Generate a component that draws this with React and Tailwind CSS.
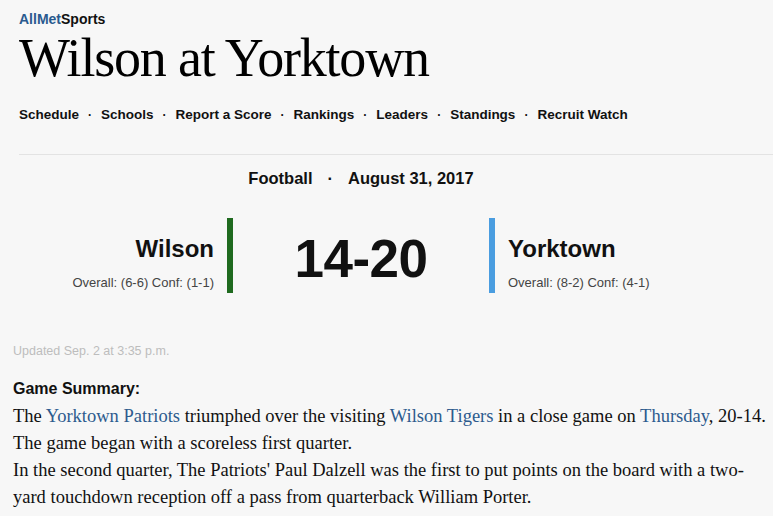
const NAV = ["Schedule", "Schools", "Report a Score", "Rankings", "Leaders", "Standings", "Recruit Watch"];

const sans = { fontFamily: '"Liberation Sans", Arial, sans-serif' };

function Team({ name, record, align }) {
  return (
    <div className={align === "right" ? "w-[195px] text-right" : "w-[195px] text-left"}>
      <div className="text-[24px] font-bold leading-[30px] text-[#111] mt-[16px]">{name}</div>
      <div className="text-[13px] leading-[16px] text-[#444] mt-[11px]">{record}</div>
    </div>
  );
}

export default function App() {
  return (
    <div className="min-h-[516px] bg-[#f7f7f7] text-[#111]" style={sans}>
      <div className="pl-[19px] pt-[11px]">
        <div className="text-[14px] font-bold leading-[16px]">
          <span className="text-[#2a5a8f]">AllMet</span>
          <span className="text-[#111]">Sports</span>
        </div>
        <h1 className="font-['Liberation_Serif',serif] text-[54px] leading-[53px] tracking-[-1.2px] font-normal text-black mt-[5px]">
          Wilson at Yorktown
        </h1>
        <nav className="flex items-center mt-[21px] text-[13.5px] font-bold leading-[18px] text-[#111]">
          {NAV.map((item, i) => (
            <div key={item} className="flex items-center">
              {i > 0 && <span className="px-[9px] text-[12px]">·</span>}
              <span>{item}</span>
            </div>
          ))}
        </nav>
        <div className="h-px bg-[#e3e3e3] mt-[30px]" />
      </div>

      <div className="w-[722px] px-[19px]">
        <div className="flex justify-center items-center gap-[15px] mt-[13px] text-[16.5px] font-bold leading-[20px]">
          <span>Football</span>
          <span>·</span>
          <span>August 31, 2017</span>
        </div>

        <div className="flex justify-center mt-[30px]">
          <Team name="Wilson" record="Overall: (6-6) Conf: (1-1)" align="right" />
          <div className="w-[6px] h-[75px] bg-[#1f6a1f] ml-[13px]" />
          <div className="w-[256px] flex items-center justify-center text-[53px] font-black leading-none tracking-[-0.5px] pt-[6px]">
            14-20
          </div>
          <div className="w-[6px] h-[75px] bg-[#4a9de0] mr-[13px]" />
          <Team name="Yorktown" record="Overall: (8-2) Conf: (4-1)" align="left" />
        </div>
      </div>

      <div className="pl-[13px] pr-[4px]">
        <div className="text-[12.5px] text-[#bdbdbd] leading-[16px] mt-[50px]">Updated Sep. 2 at 3:35 p.m.</div>
        <div className="text-[16px] font-bold leading-[20px] mt-[20px]">Game Summary:</div>
        <div className="font-['Liberation_Serif',serif] text-[18.5px] leading-[27px] text-[#111] mt-[4px]">
          <p>
            The <span className="text-[#2d5b8e]">Yorktown Patriots</span> triumphed over the visiting{" "}
            <span className="text-[#2d5b8e]">Wilson Tigers</span> in a close game on{" "}
            <span className="text-[#2d5b8e]">Thursday</span>, 20-14.
          </p>
          <p>The game began with a scoreless first quarter.</p>
          <p>
            In the second quarter, The Patriots' Paul Dalzell was the first to put points on the board with a two-yard
            touchdown reception off a pass from quarterback William Porter.
          </p>
        </div>
      </div>
    </div>
  );
}
